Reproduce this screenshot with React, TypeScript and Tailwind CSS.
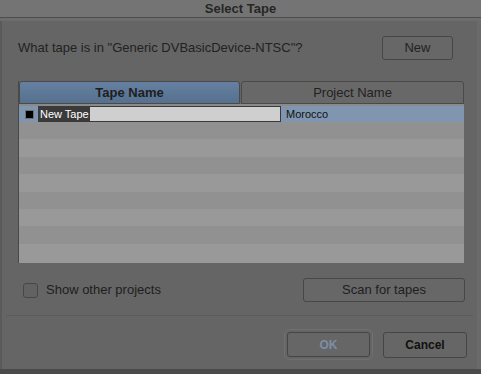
import React from "react";

const font = { fontFamily: '"Liberation Sans", Arial, sans-serif' };

export default function App() {
  const stripes = [0, 1, 2, 3, 4, 5, 6, 7];
  return (
    <div
      className="w-[481px] h-[374px] bg-[#656565] flex flex-col overflow-hidden"
      style={font}
    >
      {/* Title bar */}
      <div className="h-[17px] bg-[#747474] flex items-center justify-center text-[13px] font-bold text-[#262626] leading-none">
        Select Tape
      </div>
      <div className="h-[1px] bg-[#4e4e4e]" />
      <div className="h-[3px] bg-[#6d6d6d]" />

      <div className="flex-1 flex flex-col border-l-2 border-l-[#5a5a5a] border-r-[4px] border-r-[#6a6a6a]">
        {/* Question row */}
        <div className="mt-[15px] h-[24px] flex items-center pl-[16px] pr-[24px]">
          <span className="text-[13px] text-[#222]">
            What tape is in "Generic DVBasicDevice-NTSC"?
          </span>
          <div className="ml-auto w-[71px] h-[24px] rounded-[3px] border border-[#464646] bg-[#676767] flex items-center justify-center text-[13px] text-[#222]">
            New
          </div>
        </div>

        {/* Table */}
        <div className="mt-[21px] ml-[16px] w-[446px] h-[182px] flex flex-col border-l border-l-[#484848]">
          <div className="h-[23px] flex gap-[1px]">
            <div className="w-[221px] h-[23px] rounded-t-[3px] border border-[#4a4a4a] bg-gradient-to-b from-[#6580a0] to-[#56708f] flex items-center justify-center text-[13px] font-bold text-[#1e1e1e]">
              Tape Name
            </div>
            <div className="flex-1 h-[23px] rounded-t-[3px] border border-[#4a4a4a] bg-[#686868] flex items-center justify-center text-[13px] text-[#222]">
              Project Name
            </div>
          </div>
          <div className="flex-1 bg-[#999] flex flex-col">
            <div className="h-[2px] bg-[#8a8a8a]" />
            <div className="h-[16px] bg-[#8096b0] flex items-center">
              <div className="ml-[6px] w-[9px] h-[9px] bg-black border border-[#707070]" />
              <div className="ml-[4px] w-[243px] h-[16px] flex border border-[#3a3a3a]">
                <div className="bg-[#3a3a3a] text-white text-[11px] leading-[14px] pl-[1px] pr-[1px]">
                  New Tape
                </div>
                <div className="flex-1 bg-[#cfcfcf]" />
              </div>
              <span className="ml-[5px] text-[11px] text-[#111]">Morocco</span>
            </div>
            {stripes.map((i) => (
              <div
                key={i}
                className={
                  i % 2 === 0
                    ? "h-[17.4px] bg-[#919191]"
                    : "h-[17.4px] bg-[#999999]"
                }
              />
            ))}
          </div>
        </div>

        {/* Bottom controls */}
        <div className="mt-[15px] h-[24px] flex items-center pl-[21px] pr-[12px]">
          <div className="w-[15px] h-[15px] rounded-[3px] border border-[#474747] bg-[#626262]" />
          <span className="ml-[8px] text-[13px] text-[#1e1e1e]">Show other projects</span>
          <div className="ml-auto w-[162px] h-[24px] rounded-[3px] border border-[#474747] bg-[#676767] flex items-center justify-center text-[13px] text-[#1e1e1e]">
            Scan for tapes
          </div>
        </div>

        <div className="mt-[13px] h-[1px] mx-[4px] bg-[#5c5c5c]" />

        {/* Action buttons */}
        <div className="mt-[13px] flex items-center justify-end pr-[10px] gap-[10px]">
          <div className="p-[2px] rounded-[5px] border border-[#707070]">
            <div className="w-[83px] h-[25px] rounded-[3px] border border-[#454545] bg-[#666] flex items-center justify-center text-[12px] font-bold text-[#7c8ea6]">
              OK
            </div>
          </div>
          <div className="w-[84px] h-[26px] rounded-[3px] border border-[#454545] bg-[#666] flex items-center justify-center text-[12px] font-bold text-[#111]">
            Cancel
          </div>
        </div>
      </div>
      <div className="h-[5px] bg-[#4a4a4a]" />
    </div>
  );
}
